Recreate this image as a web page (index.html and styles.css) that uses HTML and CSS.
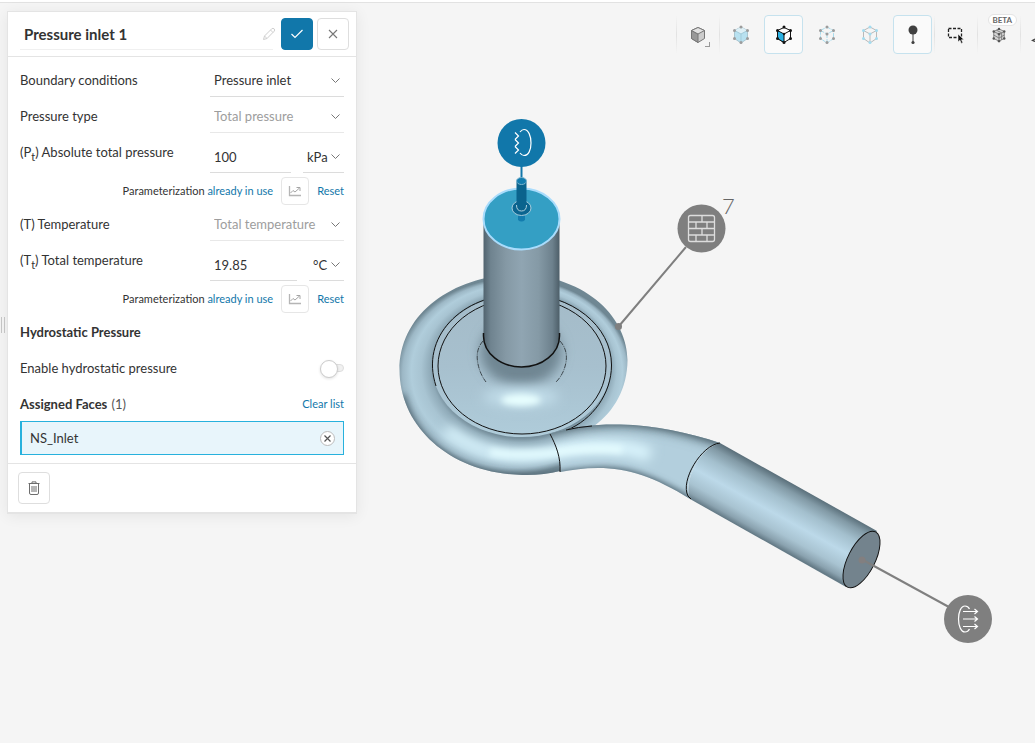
FILE: index.html
```html
<!DOCTYPE html>
<html lang="en">
<head>
<meta charset="utf-8">
<title>Pressure inlet 1</title>
<meta name="viewport" content="width=device-width, initial-scale=1">
<link rel="stylesheet" href="styles.css">
</head>
<body>
<svg width="0" height="0" class="symbols" aria-hidden="true">
  <symbol id="chart" viewBox="0 0 14 12"><path d="M1.5 1v9.5H13" fill="none" stroke="#b5b5b5" stroke-width="1.3"/><path d="M2.500 8 5 5.500l2 1.500L11.500 3M8.500 2.500H12V6" fill="none" stroke="#a5a5a5"/></symbol>
</svg>
<div class="topline"></div>
<main class="workspace">
  <div class="gutter"><span class="grip"></span></div>
  <form class="panel">
    <header class="panel-head">
      <div class="title-wrap">
        <input class="title" type="text" value="Pressure inlet 1" aria-label="Name">
        <svg class="pencil" width="14" height="14" viewBox="0 0 14 14" fill="none" stroke="#cfcfcf"><path d="M1.500 12.500 2.500 9 9.800 1.700Q11 .8 12.200 1.900 13.200 3 12.200 4.200L5 11.500ZM8.500 3 11 5.500M2.500 9 5 11.500"/></svg>
      </div>
      <button class="btn primary" type="button" aria-label="Apply"><svg width="14" height="12" viewBox="0 0 14 12"><path d="M1.500 6 5 9.500 12.500 2" fill="none" stroke="#fff" stroke-width="1.200"/></svg></button>
      <button class="btn" type="button" aria-label="Close"><svg width="10" height="10" viewBox="0 0 10 10"><path d="M1 1l8 8M9 1 1 9" stroke="#777" stroke-width="1.100"/></svg></button>
    </header>
    <div class="panel-body">
      <div class="row">
        <label for="bc">Boundary conditions</label>
        <div class="field"><select id="bc" class="line"><option>Pressure inlet</option></select></div>
      </div>
      <div class="row">
        <label for="pt">Pressure type</label>
        <div class="field"><select id="pt" class="line muted"><option>Total pressure</option></select></div>
      </div>
      <div class="row value">
        <label for="p">(P<sub>t</sub>) Absolute total pressure</label>
        <div class="field"><input id="p" class="line" type="text" value="100"><select class="line unit" aria-label="Pressure unit"><option>kPa</option></select></div>
      </div>
      <div class="param">
        <span>Parameterization <a href="#">already in use</a></span>
        <button class="chart-btn" type="button" aria-label="Edit table"><svg width="14" height="12"><use href="#chart"/></svg></button>
        <a href="#">Reset</a>
      </div>
      <div class="row">
        <label for="tt">(T) Temperature</label>
        <div class="field"><select id="tt" class="line muted"><option>Total temperature</option></select></div>
      </div>
      <div class="row value">
        <label for="t">(T<sub>t</sub>) Total temperature</label>
        <div class="field"><input id="t" class="line" type="text" value="19.85"><select class="line unit" aria-label="Temperature unit"><option>°C</option></select></div>
      </div>
      <div class="param">
        <span>Parameterization <a href="#">already in use</a></span>
        <button class="chart-btn" type="button" aria-label="Edit table"><svg width="14" height="12"><use href="#chart"/></svg></button>
        <a href="#">Reset</a>
      </div>
      <h2 class="row heading">Hydrostatic Pressure</h2>
      <div class="row">
        <label for="hs">Enable hydrostatic pressure</label>
        <input id="hs" class="toggle" type="checkbox">
      </div>
      <div class="row faces">
        <h2 class="heading">Assigned Faces <span class="count">(1)</span></h2>
        <a class="small" href="#">Clear list</a>
      </div>
      <div class="face">
        <span>NS_Inlet</span>
        <button class="remove" type="button" aria-label="Remove NS_Inlet"><svg width="7" height="7" viewBox="0 0 7 7"><path d="M.5.5l6 6M6.500.5l-6 6" stroke="#555" stroke-width="1.200"/></svg></button>
      </div>
    </div>
    <footer class="panel-foot">
      <button class="btn" type="button" aria-label="Delete"><svg width="12" height="14" viewBox="0 0 12 14" fill="none" stroke="#6d6d6d"><path d="M.5 2.500h11M4 2.500V.9h4v1.600M1.500 2.500V12q0 1.500 1.500 1.500h6q1.500 0 1.500-1.500V2.500M4 5v6M6 5v6M8 5v6"/></svg></button>
    </footer>
  </form>

  <section class="stage">
    <nav class="toolbar" aria-label="View">
      <i class="sep"></i>
      <button class="tool menu" type="button" aria-label="Orientation"><svg width="16" height="18" viewBox="0 0 16 18" stroke="#777" stroke-linejoin="round"><path d="M8 1.500 14.500 4.500v8L8 16.500 1.500 12.500v-8Z" fill="#ccc"/><path d="M8 8v8.500L1.500 12.500v-8Z" fill="#999"/><path d="M8 1.500 14.500 4.500 8 8 1.500 4.500Z" fill="#e2e2e2"/></svg></button>
      <i class="sep"></i>
      <button class="tool" type="button" aria-label="Select volumes"><svg width="18" height="20" viewBox="0 0 18 20"><path d="M9 2 15.500 5.500v8L9 18 2.500 13.500v-8Z" fill="#b8e1f0" stroke="#a9c6d1"/><path d="M9 2 15.500 5.500 9 9 2.500 5.500Z" fill="#dff0f6"/><path d="M2.500 5.500 9 9l6.500-3.500M9 9v9" fill="none" stroke="#a2cbd9"/><g fill="#9c9c9c"><circle cx="9" cy="2" r="1.500"/><circle cx="2.500" cy="5.500" r="1.500"/><circle cx="15.500" cy="5.500" r="1.500"/><circle cx="2.500" cy="13.500" r="1.500"/><circle cx="15.500" cy="13.500" r="1.500"/><circle cx="9" cy="17.500" r="1.500"/></g></svg></button>
      <button class="tool active" type="button" aria-label="Select faces"><svg width="18" height="20" viewBox="0 0 18 20" stroke="#111"><path d="M9 2.500 15.500 5.500v8L9 17.500 2.500 13.500v-8Z" fill="#fff"/><path d="M2.500 5.500 9 9v8.500l-6.500-4Z" fill="#2bb2e4"/><path d="M9 9l6.500-3.500" fill="none"/><g fill="#111" stroke="none"><circle cx="9" cy="2" r="1.500"/><circle cx="2.500" cy="5.500" r="1.500"/><circle cx="15.500" cy="5.500" r="1.500"/><circle cx="2.500" cy="13.500" r="1.500"/><circle cx="15.500" cy="13.500" r="1.500"/><circle cx="9" cy="17.500" r="1.500"/><circle cx="9" cy="9" r="1.200"/></g></svg></button>
      <button class="tool" type="button" aria-label="Select edges"><svg width="18" height="20" viewBox="0 0 18 20"><path d="M9 2 15.500 5.500v8L9 18 2.500 13.500v-8ZM2.500 5.500 9 9l6.500-3.500M9 9v8" fill="none" stroke="#a8dced" stroke-dasharray="4 1"/><g fill="#9c9c9c"><circle cx="9" cy="2" r="1.500"/><circle cx="2.500" cy="5.500" r="1.500"/><circle cx="15.500" cy="5.500" r="1.500"/><circle cx="2.500" cy="13.500" r="1.500"/><circle cx="15.500" cy="13.500" r="1.500"/><circle cx="9" cy="17.500" r="1.500"/><circle cx="9" cy="9" r="1.500"/></g></svg></button>
      <button class="tool" type="button" aria-label="Select vertices"><svg width="18" height="20" viewBox="0 0 18 20"><path d="M9 2 15.500 5.500v8L9 18 2.500 13.500v-8ZM2.500 5.500 9 9l6.500-3.500M9 9v8" fill="none" stroke="#b9b9b9"/><g fill="#a3dcf0"><circle cx="9" cy="2" r="1.500"/><circle cx="2.500" cy="5.500" r="1.500"/><circle cx="15.500" cy="5.500" r="1.500"/><circle cx="2.500" cy="13.500" r="1.500"/><circle cx="15.500" cy="13.500" r="1.500"/><circle cx="9" cy="17.500" r="1.500"/><circle cx="9" cy="9" r="1.500"/></g></svg></button>
      <button class="tool active" type="button" aria-label="Probe"><svg width="12" height="22" viewBox="0 0 12 22" fill="#404040"><circle cx="6" cy="6" r="4.500"/><path d="M5.500 8h1v11h-1z"/><circle cx="6" cy="18.500" r="1.600"/></svg></button>
      <i class="sep"></i>
      <button class="tool" type="button" aria-label="Box select"><svg width="18" height="18" viewBox="0 0 18 18"><path d="M1.500 2.500h13v9h-13Z" fill="none" stroke="#222" stroke-width="1.300" stroke-dasharray="3 1.500"/><path d="M11 8v8l2-1.800 1.300 3.200 1.500-.7-1.300-3H17Z" fill="#111" stroke="#f5f5f5" stroke-width=".6"/></svg></button>
      <i class="sep"></i>
      <button class="tool" type="button" aria-label="Mesh, beta"><svg width="14" height="16" viewBox="0 0 16 18" stroke="#777" fill="none"><path d="M8 2 14 5v8L8 16 2 13V5Z" fill="#d5d5d5"/><path d="M2 5l6 3 6-3M8 8v8M5 3.500l6 3v8M2 9l6 3.500L14 9"/><g fill="#555" stroke="none"><circle cx="8" cy="2" r="1.400"/><circle cx="2" cy="5" r="1.400"/><circle cx="14" cy="5" r="1.400"/><circle cx="2" cy="13" r="1.400"/><circle cx="14" cy="13" r="1.400"/><circle cx="8" cy="16" r="1.400"/><circle cx="8" cy="8" r="1.400"/></g></svg><span class="beta">BETA</span></button>
      <i class="sep"></i>
      <button class="tool cut" type="button" aria-label="More"><svg width="4" height="14" viewBox="0 0 4 14"><path d="M4 11 1.500 12.500 4 13.500" fill="none" stroke="#444" stroke-width="1.300"/></svg></button>
    </nav>

    <svg class="scene" viewBox="357 66 678 677" preserveAspectRatio="xMinYMin meet" role="img" aria-label="Pipe geometry">
      <defs>
        <filter id="b2" filterUnits="userSpaceOnUse" x="380" y="250" width="380" height="270"><feGaussianBlur stdDeviation="3"/></filter>
        <filter id="b5" filterUnits="userSpaceOnUse" x="380" y="250" width="380" height="270"><feGaussianBlur stdDeviation="6"/></filter>
        <radialGradient id="ring" gradientUnits="userSpaceOnUse" gradientTransform="scale(1 .83)" cx="513.500" cy="453" r="118" fx="522" fy="441" fr="87">
          <stop offset="0" stop-color="#758e9b"/><stop offset=".12" stop-color="#90abb9"/><stop offset=".35" stop-color="#a8c4d2"/><stop offset=".6" stop-color="#b0cddb"/><stop offset=".82" stop-color="#9db8c6"/><stop offset="1" stop-color="#6f8793"/>
        </radialGradient>
        <linearGradient id="cyl" gradientUnits="userSpaceOnUse" x1="483" y1="0" x2="560" y2="0">
          <stop offset="0" stop-color="#4f616c"/><stop offset=".1" stop-color="#6f838f"/><stop offset=".3" stop-color="#8599a5"/><stop offset=".5" stop-color="#90a5b2"/><stop offset=".72" stop-color="#859aa6"/><stop offset=".9" stop-color="#6d818d"/><stop offset="1" stop-color="#4b5c66"/>
        </linearGradient>
        <linearGradient id="pipe" gradientUnits="userSpaceOnUse" x1="719" y1="443" x2="688.500" y2="498">
          <stop offset="0" stop-color="#5b707b"/><stop offset=".12" stop-color="#829aa6"/><stop offset=".3" stop-color="#a3bfcd"/><stop offset=".55" stop-color="#bcd9e9"/><stop offset=".78" stop-color="#a8c3d1"/><stop offset=".92" stop-color="#8aa2af"/><stop offset="1" stop-color="#657b87"/>
        </linearGradient>
        <linearGradient id="disc" x1="0" y1="0" x2="0" y2="1">
          <stop offset="0" stop-color="#a4bbc8"/><stop offset=".5" stop-color="#a7c0ce"/><stop offset="1" stop-color="#b0cddb"/>
        </linearGradient>
        <clipPath id="ringclip"><path d="M399.500 370C399.500 315 450 276 518 274C590 276 627.500 320 627.500 360C627.500 388 614 412 594 426L560 436V471C548 474 535 475.500 522 475C448 473 399.500 425 399.500 370Z"/></clipPath>
        <clipPath id="bendclip"><path d="M549 434C575 426 598 424 620 424.500C655 425 690 433 720 443C700 448 683 480 690 499C655 477 628 468 598 468C584 468 572 470 560 472C561 460 557 445 549 434Z"/></clipPath>
        <clipPath id="discclip"><ellipse cx="521.700" cy="365.500" rx="89.700" ry="71.500"/></clipPath>
      </defs>

      <g clip-path="url(#ringclip)">
        <rect x="395" y="270" width="240" height="210" fill="url(#ring)"/>
        <path d="M446 430Q480 456 525 456Q545 456 575 449" fill="none" stroke="#d8f3fc" stroke-width="12" filter="url(#b5)"/>
        <path d="M490 452Q520 458 575 450" fill="none" stroke="#e4fcff" stroke-width="7" filter="url(#b2)"/>
        <path d="M402 395C416 448 466 477 522 477.500Q540 478 562 473" fill="none" stroke="#4f6571" stroke-width="6" filter="url(#b2)"/>
      </g>
      <g clip-path="url(#discclip)">
        <rect x="430" y="292" width="184" height="150" fill="url(#disc)"/>
        <ellipse cx="521" cy="352" rx="41" ry="34" fill="#708693" filter="url(#b5)"/>
        <ellipse cx="521" cy="397" rx="38" ry="10" fill="#c0dbe8" filter="url(#b5)"/>
        <ellipse cx="521" cy="400" rx="20" ry="6" fill="#e8ffff" filter="url(#b2)"/>
      </g>
      <ellipse cx="522" cy="366" rx="84" ry="68" class="edge"/>
      <path class="edge" d="M436 386C420 338 460 294 521.700 294C572 294 611.500 326 611.500 365C611.500 394 592 420 567 430"/>
      <g clip-path="url(#bendclip)">
        <rect x="545" y="420" width="180" height="82" fill="#b3cfdd"/>
        <path d="M535 456Q580 444 612 447Q634 448 650 455" fill="none" stroke="#dcf6fe" stroke-width="14" filter="url(#b5)"/>
        <path d="M540 455Q585 446 622 450" fill="none" stroke="#e6fdff" stroke-width="7" filter="url(#b2)"/>
        <path d="M515 440C575 422 598 420 620 420.500C655 421 690 429 750 450" fill="none" stroke="#5d737e" stroke-width="12" filter="url(#b5)"/>
        <path d="M515 438C575 420 598 420 620 420.500C655 421 690 429 750 450" fill="none" stroke="#50656f" stroke-width="7" filter="url(#b2)"/>
        <path d="M520 482C584 470 600 471 605 471C635 471 662 484 710 512" fill="none" stroke="#4f6571" stroke-width="8" filter="url(#b2)"/>
      </g>
      <path d="M720 443 877 531 846 587 690 499C683 480 700 448 720 443Z" fill="url(#pipe)"/>
      <path class="edge" d="M550 434C556 445 561 458 560 472M720 443C701 445 680 481 688 496L691 499M566 430Q578 427 592 426"/>
      <ellipse cx="861.500" cy="559.500" rx="13.500" ry="31" transform="rotate(27 861.500 559.500)" fill="#73838d" stroke="#111"/>

      <path d="M483.500 219V336A38 31 0 0 0 559.500 336V219Z" fill="url(#cyl)"/>
      <path class="edge thick" d="M483.500 333V336A38 31 0 0 0 559.500 336V333"/>
      <path class="edge faint" stroke-dasharray="5 1 1 1" d="M483 341Q475 350 478 364Q480 374 486 382M560 341Q568 350 566 362Q564 374 556 382"/>
      <ellipse cx="521.500" cy="219" rx="38" ry="30.500" fill="#349fc4" stroke="#a9dcfc" stroke-width="2"/>

      <path d="M521.500 166V182" stroke="#1277aa" stroke-width="2"/>
      <path d="M518 213h7v7q-3.500 3-7 0z" fill="#137cae"/>
      <ellipse cx="521.500" cy="208" rx="9.500" ry="7.500" fill="#0b6590" stroke="#a6ccdc"/>
      <path d="M516.500 181V207A5 4 0 0 0 526.500 207V181Z" fill="#0a638d"/>
      <path d="M516.500 205Q516.500 211 521.500 211Q526.500 211 526.500 205" fill="none" stroke="#b0d2df"/>
      <ellipse cx="521.500" cy="181" rx="5" ry="3.500" fill="#137cae" stroke="#7fb6cf"/>
      <circle cx="521.500" cy="143" r="24" fill="#1177aa"/>
      <g fill="none" stroke="#fff" stroke-width="1.200"><path d="M520 132Q522 129.500 524 129.500C528.500 129.500 531 136 531 143S528.500 155.500 524 155.500Q522 155.500 520 153"/><path d="M515 132.500 518.500 136 515 139.500M515 139.500 518.500 143 515 146.500M515 146.500 518.500 150 515 153.500"/></g>

      <path d="M619 326 686 247M863 560 948 606.500" stroke="#7f7f7f" stroke-width="2"/>
      <circle cx="618.500" cy="326.500" r="3.500" fill="#7f7f7f"/><circle cx="862" cy="560" r="3.500" fill="#827f80"/>
      <circle cx="701.500" cy="228.500" r="24" fill="#7f7f7f"/>
      <g fill="none" stroke="#ddd" stroke-width="1.300"><rect x="688.500" y="215.500" width="26" height="26" rx="2"/><path d="M688.500 222h26M688.500 228.500h26M688.500 235h26M702 215.500v6.500M702 228.500v6.500M696 222v6.500M707 222v6.500M696 235v6.500M707 235v6.500"/></g>
      <text x="722" y="214" class="pin-count">7</text>
      <circle cx="968" cy="619" r="24" fill="#7f7f7f"/>
      <g fill="none" stroke="#fff" stroke-width="1.200"><path d="M969.500 609Q968 606 965 606C961 606 958.500 612 958.500 619S961 632 965 632Q968 632 969.500 629"/><path d="M963 611.500h14M963 619h14M963 626.500h14M974.500 609l3 2.500-3 2.500M974.500 616.500l3 2.500-3 2.500M974.500 624l3 2.500-3 2.500"/></g>
    </svg>
  </section>
</main>
</body>
</html>
```
FILE: styles.css
```css
* { box-sizing: border-box; }
body {
  margin: 0;
  min-height: 100vh;
  display: flex;
  flex-direction: column;
  background: #f5f5f5;
  color: #333;
  font: 13px/20px Lato, sans-serif;
  overflow-x: hidden;
}
button, input, select { font: inherit; color: inherit; margin: 0; }
a { color: #1277aa; text-decoration: none; }
h2 { margin: 0; font-size: 13px; }
.symbols { position: absolute; }
.topline { height: 3px; background: #fff; border-bottom: 1px solid #e2e2e2; }
.workspace { flex: 1; display: flex; align-items: stretch; }

.gutter { width: 7px; display: flex; align-items: center; padding-bottom: 96px; }
.grip { width: 4px; height: 16px; margin-left: 1px; border: 1px solid #c8c8c8; border-width: 0 1px; }

.panel {
  align-self: flex-start;
  flex: 0 0 350px;
  margin-top: 8px;
  background: #fff;
  border: 1px solid #e4e4e4;
  border-bottom-width: 2px;
  box-shadow: 0 2px 14px rgba(0, 0, 0, .07);
}
.panel-head { display: flex; gap: 4px; padding: 6px 7px 6px 12px; border-bottom: 1px solid #e4e4e4; }
.title-wrap { flex: 1; display: flex; align-items: center; margin-right: 4px; border-bottom: 1px solid #f0f0f0; }
.title { flex: 1; min-width: 0; padding: 0 4px; border: 0; background: none; font-size: 15px; font-weight: 700; outline: 0; }
.pencil { margin-right: -3px; }
.btn {
  width: 32px; height: 32px; padding: 0;
  display: grid; place-items: center;
  background: #fff; border: 1px solid #dedede; border-radius: 4px;
}
.primary { background: #1177aa; border-color: #1177aa; }

.panel-body { padding: 5px 12px 8px; }
.row { display: flex; justify-content: space-between; align-items: center; height: 36px; }
.row label { white-space: nowrap; }
.field { display: flex; gap: 12px; width: 134px; height: 36px; padding-bottom: 1px; }
.line {
  flex: 1; min-width: 0; padding: 2px 4px 0;
  border: 0; border-bottom: 1px solid #dcdcdc; border-radius: 0;
  background: none; outline: 0; appearance: none;
}
select.line {
  padding-right: 16px;
  background: url("data:image/svg+xml,%3Csvg xmlns='http://www.w3.org/2000/svg' width='9' height='6'%3E%3Cpath d='M.5.5l4 4 4-4' fill='none' stroke='%23777'/%3E%3C/svg%3E") no-repeat right 4px top 16px;
}
.muted { color: #9d9d9d; border-color: #e8e8e8; }
.unit { flex: none; }
.value { height: 39px; align-items: flex-start; }
.value label { line-height: 36px; }
.value .field { margin-top: 6px; height: 33px; padding: 0; }
.value .unit { background-position: right 4px top 14px; }
sub { font-size: 11px; line-height: 0; vertical-align: -4px; }
.param { display: flex; justify-content: flex-end; align-items: center; gap: 8px; height: 33px; padding-top: 3px; font-size: 11px; }
.chart-btn { width: 28px; height: 28px; padding: 0; display: grid; place-items: center; background: #fff; border: 1px solid #e6e6e6; border-radius: 4px; }
.heading { font-weight: 700; }
.count { font-weight: 400; color: #555; margin-left: 1px; }
.faces { height: 35px; }
.small { font-size: 11px; }
.toggle { appearance: none; position: relative; width: 24px; height: 16px; }
.toggle::before { content: ""; position: absolute; inset: 4px 0 4px 8px; border: 1px solid #dedede; border-radius: 4px; background: #f1f1f1; }
.toggle::after { content: ""; position: absolute; left: 0; top: 0; width: 16px; height: 16px; border: 1px solid #ccc; border-radius: 50%; background: #fff; box-shadow: 0 1px 3px rgba(0, 0, 0, .12); }
.face {
  display: flex; justify-content: space-between; align-items: center;
  height: 34px; padding: 0 8px;
  border: 1px solid #27b1dd; border-left-width: 2px; background: #e8f5fb;
}
.remove { width: 15px; height: 15px; padding: 0; display: grid; place-items: center; border: 1px solid #bbb; border-radius: 50%; background: #fff; }
.panel-foot { padding: 8px 10px; border-top: 1px solid #e4e4e4; }

.stage { flex: 1; min-width: 0; display: flex; flex-direction: column; }
.toolbar { display: flex; justify-content: flex-end; align-items: center; height: 63px; }
.tool {
  position: relative; flex: none; width: 39px; height: 39px; margin: 0 2px; padding: 0;
  display: grid; place-items: center;
  border: 1px solid transparent; border-radius: 4px; background: none;
}
.active { background: #fafafa; border-color: #c6e2ee; }
.menu::after { content: ""; position: absolute; right: 6px; bottom: 6px; width: 4px; height: 4px; border: 1px solid #999; border-width: 0 1px 1px 0; }
.cut { width: 4px; margin: 0 0 0 11px; border: 0; }
.sep { flex: none; width: 1px; height: 39px; margin-right: -1px; background: linear-gradient(transparent, #e2e2e2, transparent); }
.beta { position: absolute; left: 50%; top: -2px; margin-left: -11px; padding: 0 4px; border: 1px solid #e4e4e4; border-radius: 6px; background: #fff; color: #666; font-size: 8px; font-weight: 700; line-height: 10px; }
.scene { display: block; width: 100%; flex: 1; }
.edge { fill: none; stroke: #111; }
.thick { stroke-width: 1.5; }
.faint { stroke: #3c464c; }
.pin-count { font-family: Lato, sans-serif; font-size: 22px; font-weight: 300; fill: #666; }
```
